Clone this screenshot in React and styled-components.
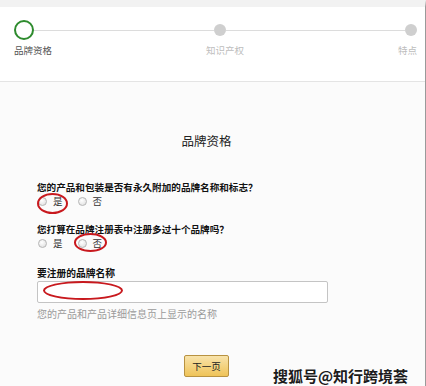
import React from 'react'
import styled, { createGlobalStyle } from 'styled-components'

const GlobalStyle = createGlobalStyle`
  html, body {
    margin: 0;
    padding: 0;
    background: #fbfbfb;
  }
  * {
    box-sizing: border-box;
  }
`

const cjk = `"Noto Sans CJK SC", "Noto Sans", sans-serif`

const Page = styled.div`
  position: relative;
  width: 426px;
  height: 386px;
  overflow: hidden;
  background: #fbfbfb;
  border-right: 1px solid #9a9a9a;
  border-top: 7px solid #f2f2f2;
  font-family: ${cjk};
  color: #222;
`

const StepPanel = styled.div`
  background: #fff;
  height: 75px;
  border-bottom: 1px solid #e4e4e4;
  padding: 13px 8px 0 14px;
`

const Track = styled.div`
  display: flex;
  align-items: center;
  height: 20px;
`

const Ring = styled.div`
  width: 20px;
  height: 20px;
  border-radius: 50%;
  border: 2px solid #2e8b2e;
  background: #fff;
  flex: none;
`

const Dot = styled.div`
  width: 12px;
  height: 12px;
  border-radius: 50%;
  background: #cfcfcf;
  flex: none;
`

const Line = styled.div`
  flex: 1;
  height: 1px;
  background: #dcdcdc;
`

const Labels = styled.div`
  display: flex;
  justify-content: space-between;
  margin-top: 3px;
`

const StepLabel = styled.span`
  font-size: 9.5px;
  line-height: 14px;
  color: ${p => (p.$active ? '#555' : '#bdbdbd')};
`

const Content = styled.div`
  padding: 0 49px 0 37px;
`

const Title = styled.h2`
  margin: 51px 0 0;
  text-align: center;
  font-size: 12.5px;
  line-height: 16px;
  font-weight: normal;
  color: #222;
`

const Question = styled.div`
  margin-top: ${p => p.$top}px;
  font-size: 9.6px;
  line-height: 14px;
  font-weight: bold;
  color: #111;
  white-space: nowrap;
`

const RadioRow = styled.div`
  display: flex;
  align-items: center;
  height: 14px;
  gap: 14px;
`

const Option = styled.label`
  position: relative;
  display: flex;
  align-items: center;
  gap: 6px;
  height: 14px;
  font-size: 9.5px;
  color: #333;
  padding-left: 1px;
`

const Radio = styled.span`
  width: 9px;
  height: 9px;
  border-radius: 50%;
  border: 1px solid #b5b5b5;
  background: radial-gradient(circle at 40% 35%, #fff 0%, #e6e6e6 70%);
`

const Mark = styled.span`
  position: absolute;
  left: ${p => p.$left}px;
  top: ${p => p.$top}px;
  width: ${p => p.$w}px;
  height: ${p => p.$h}px;
  border: 2px solid #c8191e;
  border-radius: 50%;
  pointer-events: none;
`

const FieldLabel = styled.div`
  margin-top: 16px;
  font-size: 9.75px;
  line-height: 14px;
  font-weight: bold;
  color: #111;
`

const InputWrap = styled.div`
  position: relative;
  margin-top: 1px;
  width: 291px;
`

const Input = styled.input`
  display: block;
  width: 100%;
  height: 22px;
  border: 1px solid #c4c4c4;
  border-radius: 2px;
  background: #fff;
  outline: none;
`

const Help = styled.div`
  margin-top: 4px;
  font-size: 10px;
  line-height: 14px;
  color: #9a9a9a;
`

const Actions = styled.div`
  display: flex;
  justify-content: center;
  margin-top: 34px;
`

const NextButton = styled.button`
  width: 45px;
  height: 22px;
  padding: 0;
  border: 1px solid #b89241;
  border-radius: 2px;
  background: linear-gradient(#f8e3ab, #efc358);
  font-family: ${cjk};
  font-size: 9.5px;
  color: #222;
`

const Watermark = styled.div`
  position: absolute;
  left: 273px;
  top: 358px;
  font-size: 15px;
  line-height: 22px;
  font-weight: bold;
  color: #1c1c1c;
  text-shadow: 0 0 2px #fff, 0 0 2px #fff;
  white-space: nowrap;
`

export default function App() {
  return (
    <Page>
      <GlobalStyle />
      <StepPanel>
        <Track>
          <Ring />
          <Line />
          <Dot />
          <Line />
          <Dot />
        </Track>
        <Labels>
          <StepLabel $active>品牌资格</StepLabel>
          <StepLabel>知识产权</StepLabel>
          <StepLabel>特点</StepLabel>
        </Labels>
      </StepPanel>
      <Content>
        <Title>品牌资格</Title>
        <Question $top={31}>您的产品和包装是否有永久附加的品牌名称和标志？</Question>
        <RadioRow>
          <Option>
            <Radio />是
            <Mark $left={0} $top={-1} $w={31} $h={21} />
          </Option>
          <Option>
            <Radio />否
          </Option>
        </RadioRow>
        <Question $top={14}>您打算在品牌注册表中注册多过十个品牌吗？</Question>
        <RadioRow>
          <Option>
            <Radio />是
          </Option>
          <Option>
            <Radio />否
            <Mark $left={-3} $top={-3} $w={33} $h={19} />
          </Option>
        </RadioRow>
        <FieldLabel>要注册的品牌名称</FieldLabel>
        <InputWrap>
          <Input type="text" />
          <Mark $left={6} $top={0} $w={80} $h={19} />
        </InputWrap>
        <Help>您的产品和产品详细信息页上显示的名称</Help>
        <Actions>
          <NextButton>下一页</NextButton>
        </Actions>
      </Content>
      <Watermark>搜狐号@知行跨境荟</Watermark>
    </Page>
  )
}
